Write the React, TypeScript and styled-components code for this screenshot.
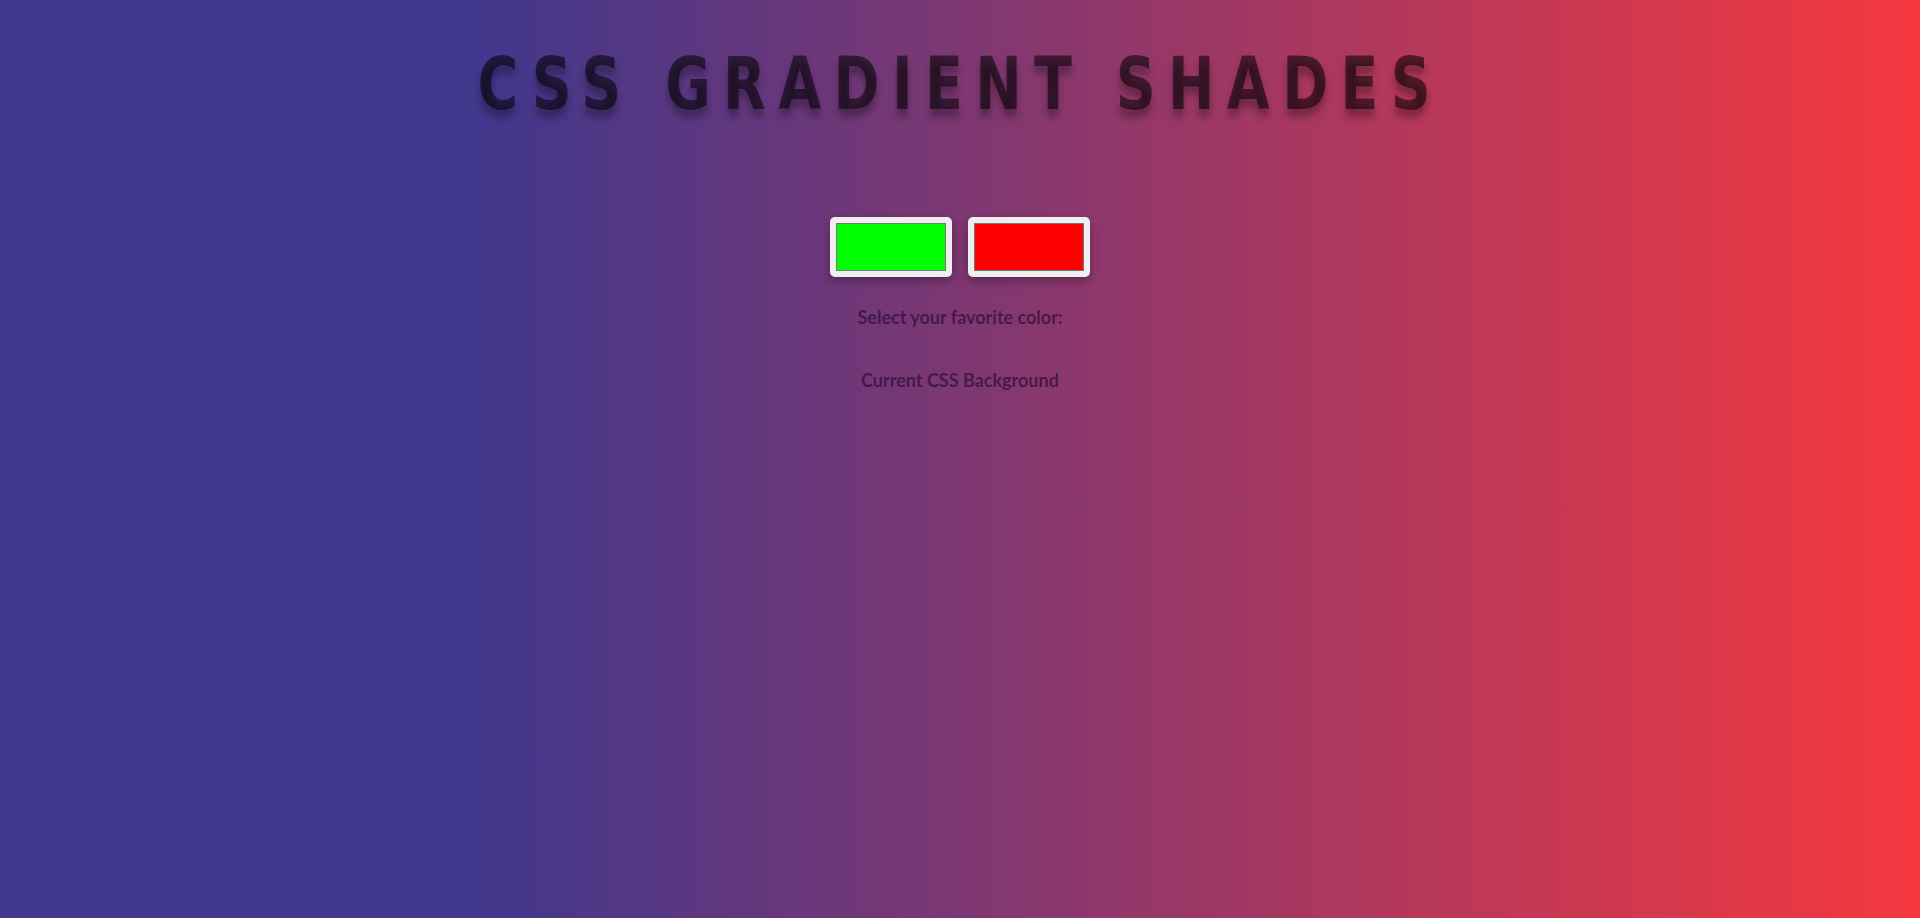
import React from "react";
import styled, { createGlobalStyle } from "styled-components";

const GlobalStyle = createGlobalStyle`
  html, body {
    margin: 0;
    padding: 0;
  }
  body {
    min-height: 100vh;
    background: linear-gradient(to right, #41378c 25%, #f5383f 100%);
    font-family: Lato, "Open Sans", sans-serif;
  }
`;

const Page = styled.main`
  min-height: 918px;
  display: flex;
  flex-direction: column;
  align-items: center;
`;

const Title = styled.h1`
  margin: 38px 0 0;
  display: inline-block;
  font-family: "Liberation Sans Narrow", "DejaVu Sans Condensed", sans-serif;
  font-weight: 700;
  font-size: 73px;
  line-height: 91px;
  letter-spacing: 0.2em;
  text-transform: uppercase;
  color: rgba(0, 0, 0, 0.55);
  text-shadow: 0 8px 8px rgba(0, 0, 0, 0.3);
  transform: scaleX(0.845);
  white-space: nowrap;
`;

const Pickers = styled.div`
  display: flex;
  gap: 16px;
  margin-top: 88px;
`;

const ColorInput = styled.input`
  -webkit-appearance: none;
  appearance: none;
  width: 122px;
  height: 60px;
  padding: 0;
  margin: 0;
  border: none;
  border-radius: 5px;
  background: #efefef;
  box-shadow: 0 4px 10px rgba(0, 0, 0, 0.3);
  cursor: pointer;

  &::-webkit-color-swatch-wrapper {
    padding: 6px;
  }
  &::-webkit-color-swatch {
    border: 1px solid #777;
    border-radius: 0;
  }
`;

const Label = styled.p<{ $gap: number }>`
  margin: ${(p) => p.$gap}px 0 0;
  font-family: Lato, "Open Sans", sans-serif;
  font-weight: 700;
  font-size: 18px;
  line-height: 22px;
  color: rgba(20, 0, 30, 0.55);
`;

export default function App() {
  return (
    <>
      <GlobalStyle />
      <Page>
        <Title>CSS Gradient Shades</Title>
        <Pickers>
          <ColorInput type="color" defaultValue="#00ff00" aria-label="First color" />
          <ColorInput type="color" defaultValue="#ff0000" aria-label="Second color" />
        </Pickers>
        <Label $gap={29}>Select your favorite color:</Label>
        <Label $gap={41}>Current CSS Background</Label>
      </Page>
    </>
  );
}
